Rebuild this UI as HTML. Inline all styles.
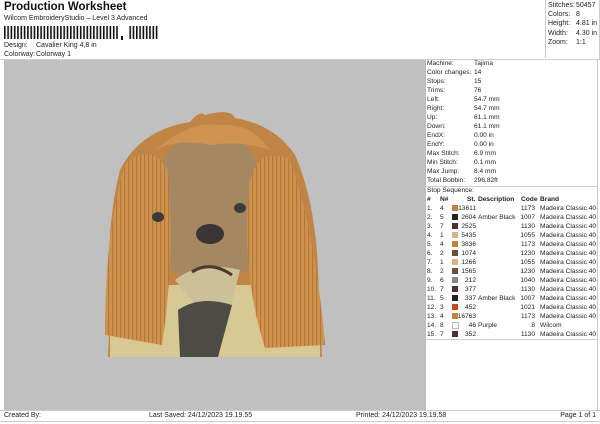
<html><head><style>
body{margin:0;width:600px;height:424px;background:#fff;font-family:"Liberation Sans",sans-serif;font-size:7px;color:#222;position:relative;overflow:hidden}
.a{position:absolute;white-space:nowrap}
.r{position:absolute;left:427px;width:170px;height:9px;line-height:9px;font-size:6.6px;white-space:nowrap}
.r span{position:absolute;white-space:nowrap}
.sw{position:absolute;width:6px;height:6px;top:1px;left:25px}
</style></head><body>
<div class="a" style="left:4px;top:1px;font-size:11.5px;font-weight:bold;color:#111">Production Worksheet</div>
<div class="a" style="left:4px;top:15px">Wilcom EmbroideryStudio – Level 3 Advanced</div>
<svg class="a" style="left:4px;top:26px" width="155" height="14">
<defs><pattern id="bc" width="3.3" height="13" patternUnits="userSpaceOnUse"><rect width="1.6" height="13" fill="#111"/></pattern></defs>
<rect x="0" y="0" width="114" height="13" fill="url(#bc)"/>
<rect x="125" y="0" width="32" height="13" fill="url(#bc)"/>
<rect x="117" y="10" width="2" height="4" fill="#111"/>
</svg>
<div class="a" style="left:4px;top:42px">Design:</div><div class="a" style="left:36px;top:42px">Cavalier King 4,8 in</div>
<div class="a" style="left:4px;top:51px">Colorway:</div><div class="a" style="left:36px;top:51px">Colorway 1</div>
<div class="a" style="left:0;top:0;width:599px;height:60px;border-right:1px solid #ccc"></div>
<div class="a" style="left:545px;top:0;width:53px;height:58px;border-left:1px solid #ccc"></div>
<div class="a" style="left:548px;top:1px;line-height:9.2px">Stitches:<br>Colors:<br>Height:<br>Width:<br>Zoom:</div>
<div class="a" style="left:576px;top:1px;line-height:9.2px">50457<br>8<br>4.81 in<br>4.30 in<br>1:1</div>
<div class="a" style="left:0;top:59px;width:600px;height:1px;background:#ccc"></div>
<div class="a" style="left:4px;top:60px;width:421px;height:350px;background:#c0c0c0"></div>
<div class="a" style="left:425px;top:60px;width:1px;height:350px;background:#bbb"></div>
<div class="a" style="left:597px;top:60px;width:1px;height:350px;background:#ccc"></div>
<svg class="a" style="left:100px;top:110px" width="230" height="252" viewBox="0 0 230 252">
<defs><pattern id="hr" width="4" height="10" patternUnits="userSpaceOnUse"><rect width="4" height="10" fill="#cf9350"/><rect width="1.2" height="10" fill="#b57838"/></pattern></defs>
<path d="M8 247 L10 200 Q5 120 20 60 Q40 20 90 12 Q100 0 105 5 Q130 -2 135 8 Q175 15 195 45 Q215 90 218 160 L222 247 Z" fill="#c08445"/>
<path d="M10 247 L10 200 Q35 170 60 175 L160 175 Q200 200 220 230 L220 247 Z" fill="#d8c894"/>
<path d="M60 60 Q70 25 110 22 Q150 25 160 60 L155 155 Q115 180 70 160 Z" fill="#a58862"/>
<path d="M75 170 Q100 150 140 160 L130 200 L100 200 Z" fill="#ccc098"/>
<path d="M80 247 L78 200 Q100 185 132 195 L118 247 Z" fill="#4c4c44"/>
<path d="M5 225 Q5 120 25 55 Q50 30 68 60 Q75 150 62 235 Z" fill="url(#hr)"/>
<path d="M225 235 Q215 120 190 50 Q160 35 150 70 Q140 160 165 238 Z" fill="url(#hr)"/>
<path d="M55 40 Q90 10 120 15 Q150 12 170 40 Q140 30 110 35 Q80 28 55 40Z" fill="#cf9350"/>
<ellipse cx="58" cy="107" rx="6" ry="5" fill="#3a3a38"/>
<ellipse cx="140" cy="98" rx="6" ry="5" fill="#3a3a38"/>
<ellipse cx="110" cy="124" rx="14" ry="10" fill="#3d3535"/>
<path d="M92 162 Q110 150 132 165" stroke="#4a3a30" stroke-width="3" fill="none"/>
</svg>
<div class="r" style="top:59px"><span>Machine:</span><span style="left:47px">Tajima</span></div>
<div class="r" style="top:68px"><span>Color changes:</span><span style="left:47px">14</span></div>
<div class="r" style="top:77px"><span>Stops:</span><span style="left:47px">15</span></div>
<div class="r" style="top:86px"><span>Trims:</span><span style="left:47px">76</span></div>
<div class="r" style="top:95px"><span>Left:</span><span style="left:47px">54.7 mm</span></div>
<div class="r" style="top:104px"><span>Right:</span><span style="left:47px">54.7 mm</span></div>
<div class="r" style="top:113px"><span>Up:</span><span style="left:47px">61.1 mm</span></div>
<div class="r" style="top:122px"><span>Down:</span><span style="left:47px">61.1 mm</span></div>
<div class="r" style="top:131px"><span>EndX:</span><span style="left:47px">0.00 in</span></div>
<div class="r" style="top:140px"><span>EndY:</span><span style="left:47px">0.00 in</span></div>
<div class="r" style="top:149px"><span>Max Stitch:</span><span style="left:47px">6.9 mm</span></div>
<div class="r" style="top:158px"><span>Min Stitch:</span><span style="left:47px">0.1 mm</span></div>
<div class="r" style="top:167px"><span>Max Jump:</span><span style="left:47px">8.4 mm</span></div>
<div class="r" style="top:176px"><span>Total Bobbin:</span><span style="left:47px">296.82ft</span></div>
<div class="a" style="left:426px;top:186px;width:171px;height:1px;background:#ccc"></div>
<div class="r" style="top:186px"><span>Stop Sequence:</span></div>
<div class="r" style="top:195px;font-weight:bold;text-decoration:underline"><span>#</span><span style="left:13px">N#</span><span style="left:40px">St.</span><span style="left:51px">Description</span><span style="left:94px">Code</span><span style="left:113px">Brand</span></div>
<div class="a" style="left:426px;top:339px;width:171px;height:1px;background:#ccc"></div>
<div class="a" style="left:0;top:410px;width:600px;height:1px;background:#ccc"></div>
<div class="a" style="left:0;top:421px;width:600px;height:1px;background:#ccc"></div>
<div class="a" style="left:4px;top:412px">Created By:</div>
<div class="a" style="left:149px;top:412px">Last Saved: 24/12/2023 19.19.55</div>
<div class="a" style="left:356px;top:412px">Printed: 24/12/2023 19.19.58</div>
<div class="a" style="right:4px;top:412px">Page 1 of 1</div>
<div class="r" style="top:204px"><span>1.</span><span style="left:13px">4</span><i class="sw" style="background:#c5803c"></i><span style="left:20px;width:29px;text-align:right">13611</span><span style="left:88px;width:20px;text-align:right">1173</span><span style="left:113px">Madeira Classic 40</span></div>
<div class="r" style="top:213px"><span>2.</span><span style="left:13px">5</span><i class="sw" style="background:#222"></i><span style="left:20px;width:29px;text-align:right">2604</span><span style="left:51px">Amber Black</span><span style="left:88px;width:20px;text-align:right">1007</span><span style="left:113px">Madeira Classic 40</span></div>
<div class="r" style="top:222px"><span>3.</span><span style="left:13px">7</span><i class="sw" style="background:#4a3430"></i><span style="left:20px;width:29px;text-align:right">2525</span><span style="left:88px;width:20px;text-align:right">1130</span><span style="left:113px">Madeira Classic 40</span></div>
<div class="r" style="top:231px"><span>4.</span><span style="left:13px">1</span><i class="sw" style="background:#d8b48c"></i><span style="left:20px;width:29px;text-align:right">5435</span><span style="left:88px;width:20px;text-align:right">1055</span><span style="left:113px">Madeira Classic 40</span></div>
<div class="r" style="top:240px"><span>5.</span><span style="left:13px">4</span><i class="sw" style="background:#c5803c"></i><span style="left:20px;width:29px;text-align:right">3836</span><span style="left:88px;width:20px;text-align:right">1173</span><span style="left:113px">Madeira Classic 40</span></div>
<div class="r" style="top:249px"><span>6.</span><span style="left:13px">2</span><i class="sw" style="background:#6a5040"></i><span style="left:20px;width:29px;text-align:right">1074</span><span style="left:88px;width:20px;text-align:right">1230</span><span style="left:113px">Madeira Classic 40</span></div>
<div class="r" style="top:258px"><span>7.</span><span style="left:13px">1</span><i class="sw" style="background:#d8b48c"></i><span style="left:20px;width:29px;text-align:right">1266</span><span style="left:88px;width:20px;text-align:right">1055</span><span style="left:113px">Madeira Classic 40</span></div>
<div class="r" style="top:267px"><span>8.</span><span style="left:13px">2</span><i class="sw" style="background:#6a5040"></i><span style="left:20px;width:29px;text-align:right">1565</span><span style="left:88px;width:20px;text-align:right">1230</span><span style="left:113px">Madeira Classic 40</span></div>
<div class="r" style="top:276px"><span>9.</span><span style="left:13px">6</span><i class="sw" style="background:#888"></i><span style="left:20px;width:29px;text-align:right">212</span><span style="left:88px;width:20px;text-align:right">1040</span><span style="left:113px">Madeira Classic 40</span></div>
<div class="r" style="top:285px"><span>10.</span><span style="left:13px">7</span><i class="sw" style="background:#4a3430"></i><span style="left:20px;width:29px;text-align:right">377</span><span style="left:88px;width:20px;text-align:right">1130</span><span style="left:113px">Madeira Classic 40</span></div>
<div class="r" style="top:294px"><span>11.</span><span style="left:13px">5</span><i class="sw" style="background:#222"></i><span style="left:20px;width:29px;text-align:right">337</span><span style="left:51px">Amber Black</span><span style="left:88px;width:20px;text-align:right">1007</span><span style="left:113px">Madeira Classic 40</span></div>
<div class="r" style="top:303px"><span>12.</span><span style="left:13px">3</span><i class="sw" style="background:#c04a20"></i><span style="left:20px;width:29px;text-align:right">452</span><span style="left:88px;width:20px;text-align:right">1021</span><span style="left:113px">Madeira Classic 40</span></div>
<div class="r" style="top:312px"><span>13.</span><span style="left:13px">4</span><i class="sw" style="background:#c5803c"></i><span style="left:20px;width:29px;text-align:right">16763</span><span style="left:88px;width:20px;text-align:right">1173</span><span style="left:113px">Madeira Classic 40</span></div>
<div class="r" style="top:321px"><span>14.</span><span style="left:13px">8</span><i class="sw" style="background:#fff;border:1px solid #bbb;width:5px;height:5px"></i><span style="left:20px;width:29px;text-align:right">46</span><span style="left:51px">Purple</span><span style="left:88px;width:20px;text-align:right">8</span><span style="left:113px">Wilcom</span></div>
<div class="r" style="top:330px"><span>15.</span><span style="left:13px">7</span><i class="sw" style="background:#4a3430"></i><span style="left:20px;width:29px;text-align:right">352</span><span style="left:88px;width:20px;text-align:right">1130</span><span style="left:113px">Madeira Classic 40</span></div>
</body></html>
